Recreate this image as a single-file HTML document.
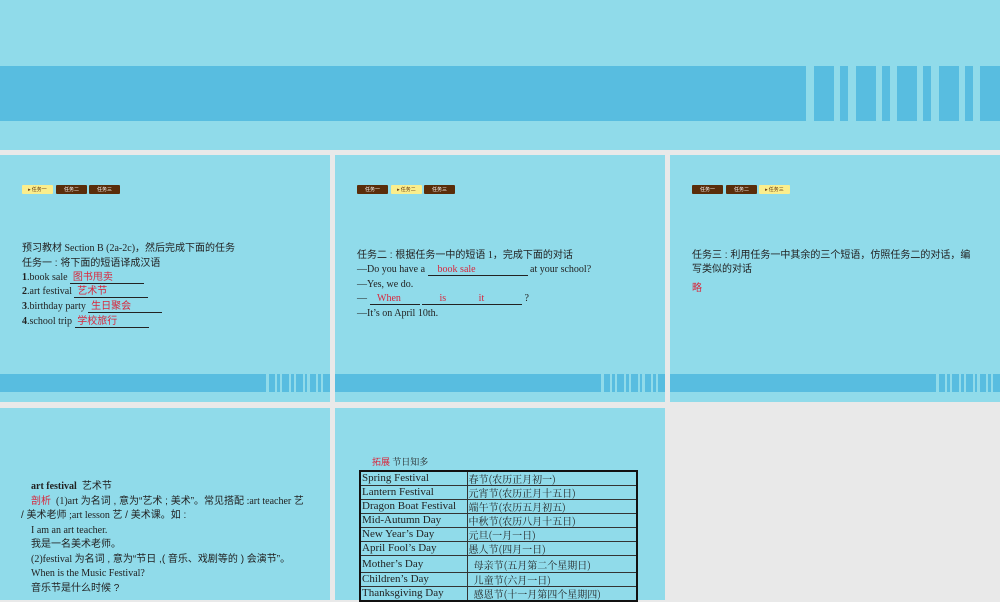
<!DOCTYPE html>
<html><head><meta charset="utf-8"><style>
*{margin:0;padding:0;box-sizing:border-box}
body{width:1000px;height:600px;background:#e9e9e9;position:relative;overflow:hidden;font-family:"Liberation Serif","Noto Sans CJK SC",serif;color:#222}
.s{position:absolute;background:#90dbea;overflow:hidden}
.b{position:absolute;background:#58bde0}
.st{position:absolute;background:#58bde0}
.cn{font-family:"Liberation Sans","Noto Sans CJK SC",sans-serif}
.t{position:absolute;font-size:10px;white-space:nowrap;line-height:14px}
.r{color:#d8273c}
.tab{position:absolute;top:30px;height:9px;width:31px;font-size:5px;line-height:9px;text-align:center;color:#fff;background:#5a2d0a;border-radius:1px;font-family:"Noto Sans CJK SC",sans-serif}
.tab.on{background:#fbee8c;color:#5a2d0a}
.u{display:inline-block;border-bottom:1px solid #222;line-height:11px}
table{border-collapse:collapse;position:absolute;left:359px;top:470px;width:279px;font-size:11px;border:2px solid #111}
td{border:1px solid #333;padding:0 1px;height:14px;line-height:13px;white-space:nowrap}
td.c{font-family:"Noto Serif CJK SC",serif;font-size:10px}
</style></head><body>
<div class="s" style="left:0;top:0;width:1000px;height:150px">
<div class="b" style="left:0;top:66px;width:806px;height:55px"></div>
<div class="st" style="left:814px;top:66px;width:20px;height:55px"></div>
<div class="st" style="left:840px;top:66px;width:8px;height:55px"></div>
<div class="st" style="left:856px;top:66px;width:20px;height:55px"></div>
<div class="st" style="left:882px;top:66px;width:8px;height:55px"></div>
<div class="st" style="left:897px;top:66px;width:20px;height:55px"></div>
<div class="st" style="left:923px;top:66px;width:8px;height:55px"></div>
<div class="st" style="left:939px;top:66px;width:20px;height:55px"></div>
<div class="st" style="left:965px;top:66px;width:8px;height:55px"></div>
<div class="st" style="left:980px;top:66px;width:20px;height:55px"></div>
</div>

<div class="s" style="left:0;top:155px;width:330px;height:247px">
<div class="tab on" style="left:22px">▸ 任务一</div><div class="tab" style="left:56px">任务二</div><div class="tab" style="left:89px">任务三</div>
<div class="t" style="left:22px;top:87px"><span class="cn">预习教材</span> Section B (2a-2c)<span class="cn">，然后完成下面的任务</span></div>
<div class="t cn" style="left:22px;top:102px">任务一 : 将下面的短语译成汉语</div>
<div class="t" style="left:22px;top:116px"><b>1</b>.book sale <span class="u cn r" style="width:74px">&nbsp;图书甩卖</span></div>
<div class="t" style="left:22px;top:130px"><b>2</b>.art festival <span class="u cn r" style="width:74px">&nbsp;艺术节</span></div>
<div class="t" style="left:22px;top:145px"><b>3</b>.birthday party <span class="u cn r" style="width:74px">&nbsp;生日聚会</span></div>
<div class="t" style="left:22px;top:160px"><b>4</b>.school trip <span class="u cn r" style="width:74px">&nbsp;学校旅行</span></div>
<div class="b" style="left:0;top:219px;width:266px;height:18px"></div>
<div class="st" style="left:269px;top:219px;width:6px;height:18px"></div><div class="st" style="left:277px;top:219px;width:3px;height:18px"></div><div class="st" style="left:282px;top:219px;width:7px;height:18px"></div><div class="st" style="left:291px;top:219px;width:3px;height:18px"></div><div class="st" style="left:296px;top:219px;width:7px;height:18px"></div><div class="st" style="left:305px;top:219px;width:2px;height:18px"></div><div class="st" style="left:310px;top:219px;width:6px;height:18px"></div><div class="st" style="left:318px;top:219px;width:3px;height:18px"></div><div class="st" style="left:323px;top:219px;width:7px;height:18px"></div>
</div>

<div class="s" style="left:335px;top:155px;width:330px;height:247px">
<div class="tab" style="left:22px">任务一</div><div class="tab on" style="left:56px">▸ 任务二</div><div class="tab" style="left:89px">任务三</div>
<div class="t" style="left:22px;top:94px"><span class="cn">任务二 : 根据任务一中的短语</span> 1<span class="cn">，完成下面的对话</span></div>
<div class="t" style="left:22px;top:108px">—Do you have a <span class="u r" style="width:100px">&nbsp;&nbsp;&nbsp;&nbsp;book sale</span> at your school?</div>
<div class="t" style="left:22px;top:123px">—Yes, we do.</div>
<div class="t" style="left:22px;top:137px">— <span class="u r" style="width:50px">&nbsp;&nbsp;&nbsp;When</span> <span class="u r" style="width:100px">&nbsp;&nbsp;&nbsp;&nbsp;&nbsp;&nbsp;&nbsp;is&nbsp;&nbsp;&nbsp;&nbsp;&nbsp;&nbsp;&nbsp;&nbsp;&nbsp;&nbsp;&nbsp;&nbsp;&nbsp;it</span> ?</div>
<div class="t" style="left:22px;top:152px">—It’s on April 10th.</div>
<div class="b" style="left:0;top:219px;width:266px;height:18px"></div>
<div class="st" style="left:269px;top:219px;width:6px;height:18px"></div><div class="st" style="left:277px;top:219px;width:3px;height:18px"></div><div class="st" style="left:282px;top:219px;width:7px;height:18px"></div><div class="st" style="left:291px;top:219px;width:3px;height:18px"></div><div class="st" style="left:296px;top:219px;width:7px;height:18px"></div><div class="st" style="left:305px;top:219px;width:2px;height:18px"></div><div class="st" style="left:310px;top:219px;width:6px;height:18px"></div><div class="st" style="left:318px;top:219px;width:3px;height:18px"></div><div class="st" style="left:323px;top:219px;width:7px;height:18px"></div>
</div>

<div class="s" style="left:670px;top:155px;width:330px;height:247px">
<div class="tab" style="left:22px">任务一</div><div class="tab" style="left:56px">任务二</div><div class="tab on" style="left:89px">▸ 任务三</div>
<div class="t cn" style="left:22px;top:94px">任务三 : 利用任务一中其余的三个短语，仿照任务二的对话，编</div>
<div class="t cn" style="left:22px;top:108px">写类似的对话</div>
<div class="t cn r" style="left:22px;top:127px">略</div>
<div class="b" style="left:0;top:219px;width:266px;height:18px"></div>
<div class="st" style="left:269px;top:219px;width:6px;height:18px"></div><div class="st" style="left:277px;top:219px;width:3px;height:18px"></div><div class="st" style="left:282px;top:219px;width:7px;height:18px"></div><div class="st" style="left:291px;top:219px;width:3px;height:18px"></div><div class="st" style="left:296px;top:219px;width:7px;height:18px"></div><div class="st" style="left:305px;top:219px;width:2px;height:18px"></div><div class="st" style="left:310px;top:219px;width:6px;height:18px"></div><div class="st" style="left:318px;top:219px;width:3px;height:18px"></div><div class="st" style="left:323px;top:219px;width:7px;height:18px"></div>
</div>

<div class="s" style="left:0;top:408px;width:330px;height:192px">
<div class="t" style="left:31px;top:72px"><b>art festival</b>&nbsp; <span class="cn">艺术节</span></div>
<div class="t" style="left:31px;top:87px"><span class="cn r">剖析</span>&nbsp; (1)art <span class="cn">为名词 , 意为“艺术 ; 美术”。常见搭配</span> :art teacher <span class="cn">艺</span></div>
<div class="t" style="left:21px;top:101px"><span class="cn">/ 美术老师</span> ;art lesson <span class="cn">艺 / 美术课。如 :</span></div>
<div class="t" style="left:31px;top:116px">I am an art teacher.</div>
<div class="t cn" style="left:31px;top:130px">我是一名美术老师。</div>
<div class="t" style="left:31px;top:145px">(2)festival <span class="cn">为名词 , 意为“节日 ,( 音乐、戏剧等的 ) 会演节”。</span></div>
<div class="t" style="left:31px;top:159px">When is the Music Festival?</div>
<div class="t cn" style="left:31px;top:174px">音乐节是什么时候 ?</div>
</div>

<div class="s" style="left:335px;top:408px;width:330px;height:192px"></div>
<div class="t" style="left:372px;top:455px;font-size:9px"><span class="cn r">拓展</span> <span style="font-family:'Noto Serif CJK SC',serif">节日知多</span></div>
<table>
<tr><td style="width:107px">Spring Festival</td><td class="c">春节(农历正月初一)</td></tr>
<tr><td>Lantern Festival</td><td class="c">元宵节(农历正月十五日)</td></tr>
<tr><td>Dragon Boat Festival</td><td class="c">端午节(农历五月初五)</td></tr>
<tr><td>Mid-Autumn Day</td><td class="c">中秋节(农历八月十五日)</td></tr>
<tr><td>New Year’s Day</td><td class="c">元旦(一月一日)</td></tr>
<tr><td>April Fool’s Day</td><td class="c">愚人节(四月一日)</td></tr>
<tr><td style="height:17px">Mother’s Day</td><td class="c">&nbsp; 母亲节(五月第二个星期日)</td></tr>
<tr><td>Children’s Day</td><td class="c">&nbsp; 儿童节(六月一日)</td></tr>
<tr><td>Thanksgiving Day</td><td class="c">&nbsp; 感恩节(十一月第四个星期四)</td></tr>
</table>
</body></html>
